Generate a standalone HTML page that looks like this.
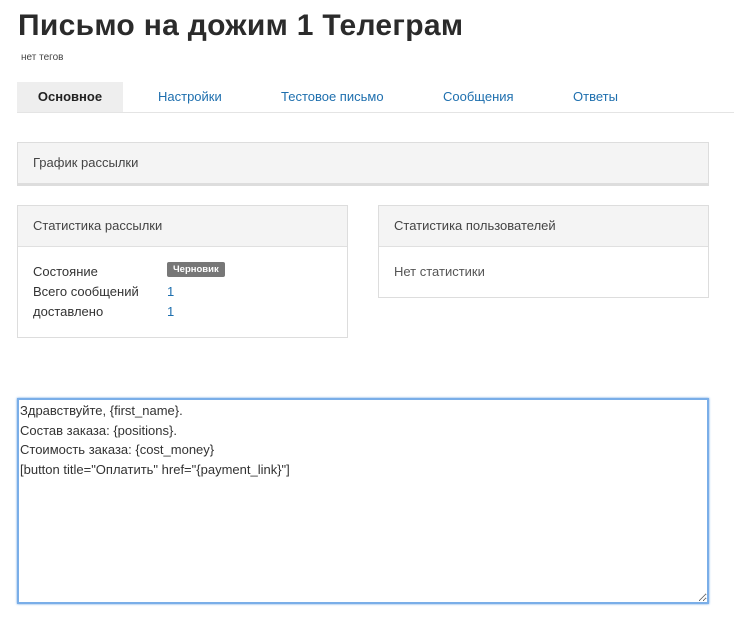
<!DOCTYPE html>
<html><head><meta charset="utf-8"><style>
*{box-sizing:border-box;margin:0;padding:0}
body{width:734px;height:624px;background:#fff;font-family:"Liberation Sans",sans-serif;color:#333;position:relative;overflow:hidden}
.a{position:absolute}
h1{position:absolute;left:18px;top:9px;font-size:30px;font-weight:bold;color:#2b2b2b;letter-spacing:0.3px}
.tags{left:21px;top:52px;font-size:10px;color:#444}
.tabs{left:17px;top:82px;width:717px;height:31px;border-bottom:1px solid #e4e4e4}
.tab{position:absolute;top:0;height:30px;line-height:30px;font-size:13px;color:#1e6fae}
.tab.act{background:#eee;color:#222;font-weight:bold;left:0;width:106px;text-align:center}
.panel{border:1px solid #ddd;background:#fff}
.ph{background:#f4f4f4;border-bottom:1px solid #e0e0e0;font-size:13px;color:#444;padding-left:15px}
.row{position:absolute;left:15px;font-size:13px;color:#333}
.v{position:absolute;left:134px;color:#1e6fae}
.badge{position:absolute;left:134px;top:-2px;background:#777;color:#fff;font-size:9.5px;font-weight:bold;padding:2px 6px;border-radius:2px}
textarea{position:absolute;left:17px;top:398px;width:692px;height:206px;border:2px solid #7aaee8;box-shadow:0 0 2px #5b9be0;font-family:"Liberation Sans",sans-serif;font-size:13px;line-height:19.5px;color:#333;padding:1px 1px;resize:both;outline:none}
</style></head><body>
<h1>Письмо на дожим 1 Телеграм</h1>
<div class="a tags">нет тегов</div>
<div class="a tabs">
<div class="tab act">Основное</div>
<div class="tab" style="left:141px">Настройки</div>
<div class="tab" style="left:264px">Тестовое письмо</div>
<div class="tab" style="left:426px">Сообщения</div>
<div class="tab" style="left:556px">Ответы</div>
</div>
<div class="a panel" style="left:17px;top:142px;width:692px;height:44px;border-bottom:3px solid #ddd;background:#f4f4f4">
<div class="ph" style="height:40px;line-height:40px;border:none">График рассылки</div></div>
<div class="a panel" style="left:17px;top:205px;width:331px;height:133px">
<div class="ph" style="height:41px;line-height:40px">Статистика рассылки</div>
<div class="row" style="top:58px">Состояние<span class="badge">Черновик</span></div>
<div class="row" style="top:78px">Всего сообщений<span class="v">1</span></div>
<div class="row" style="top:98px">доставлено<span class="v">1</span></div>
</div>
<div class="a panel" style="left:378px;top:205px;width:331px;height:93px">
<div class="ph" style="height:41px;line-height:40px">Статистика пользователей</div>
<div class="row" style="top:58px;color:#555">Нет статистики</div>
</div>
<textarea>Здравствуйте, {first_name}.
Состав заказа: {positions}.
Стоимость заказа: {cost_money}
[button title="Оплатить" href="{payment_link}"]</textarea>
</body></html>
